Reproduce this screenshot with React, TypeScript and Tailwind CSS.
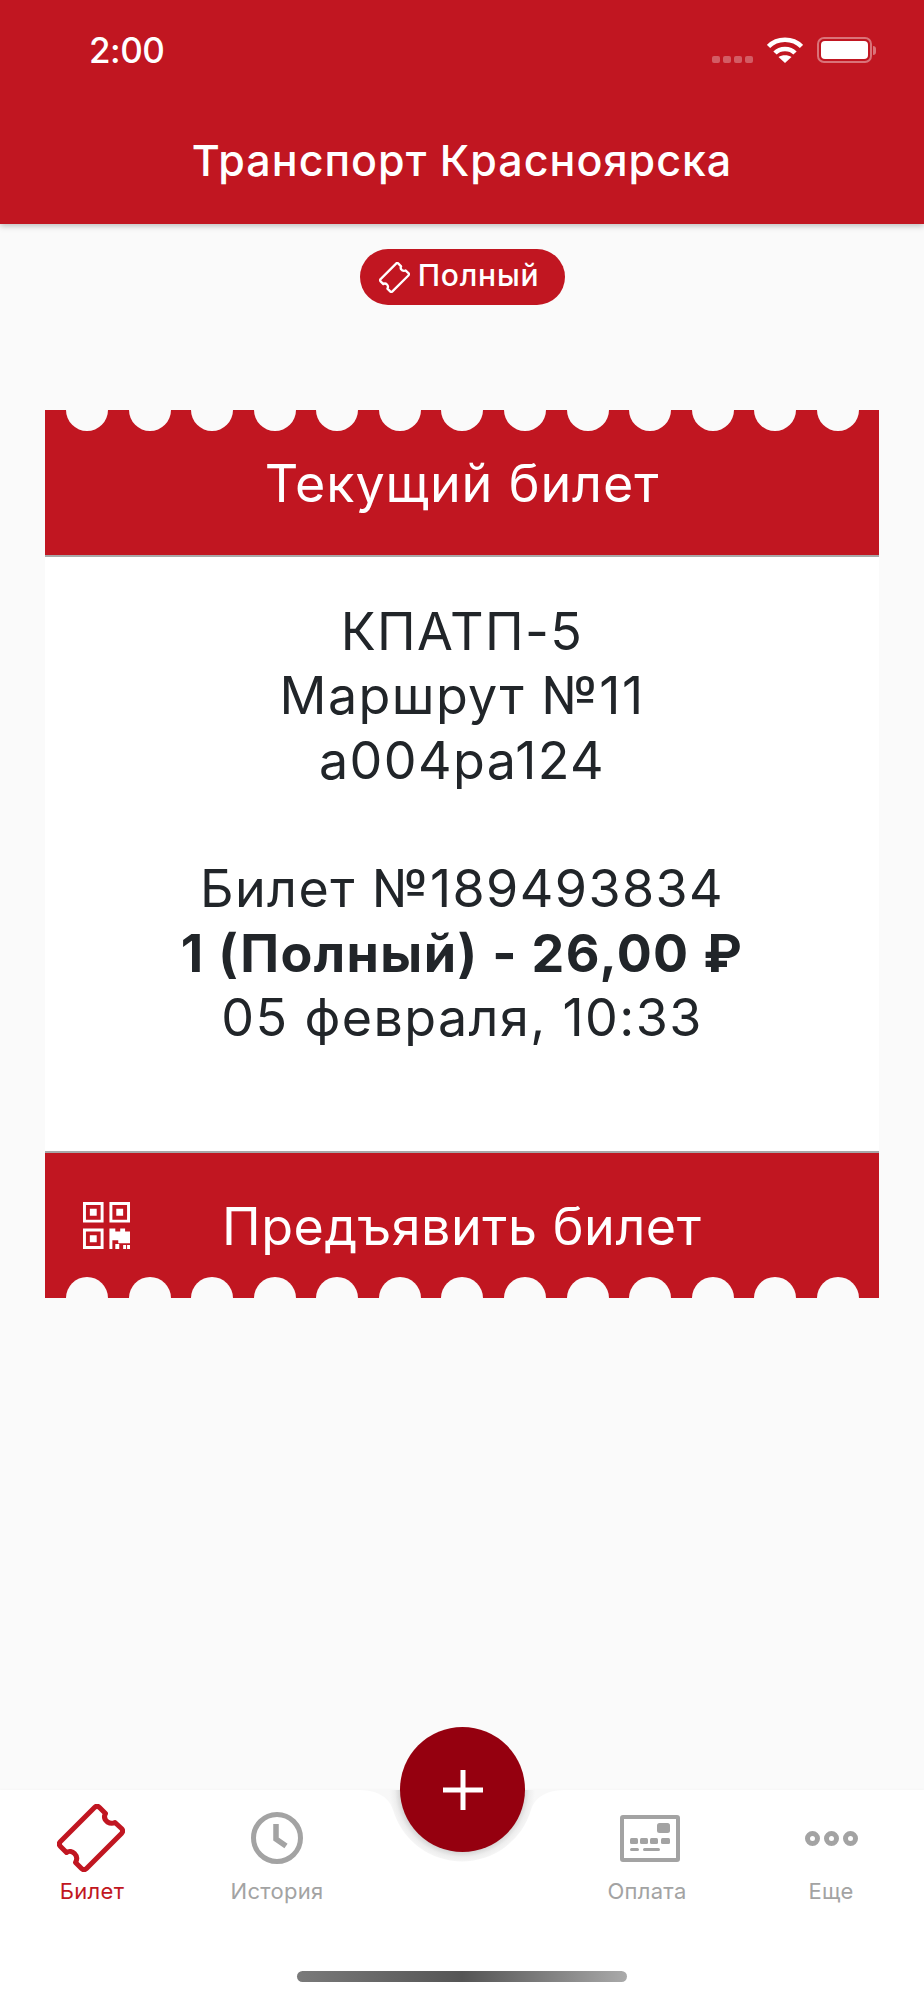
const red = 'bg-[#c11621]'

function Ticket({ className }: { className?: string }) {
  return (
    <svg viewBox="0 0 68 68" fill="none" stroke="currentColor" strokeWidth="5" strokeLinejoin="round" className={className}>
      <path d="M37.5 3.5 Q40 1 42.5 3.5 L48.5 9.5 C46.5 13 48 16 50.5 18 C53 19.5 55 20 58 18.5 L64.5 24.5 Q67 27 64.5 29.5 L29.5 64.5 Q27 67 24.5 64.5 L18.5 58.5 C20.5 55 19.5 51.5 17.5 49.5 C15.5 47.5 12 46.5 9.5 48.5 L3.5 42.5 Q1 40 3.5 37.5 Z" />
    </svg>
  )
}

function Scallops({ position }: { position: 'top' | 'bottom' }) {
  return (
    <div className={`absolute inset-x-0 flex justify-between pl-[21px] pr-[20px] ${position === 'top' ? 'top-[-21px]' : 'bottom-[-21px]'}`}>
      {Array.from({ length: 13 }).map((_, i) => (
        <div key={i} className="h-[42px] w-[42px] rounded-full bg-[#fafafa]" />
      ))}
    </div>
  )
}

function QrIcon() {
  return (
    <svg viewBox="0 0 48 48" className="h-[47px] w-[47px] text-white" fill="currentColor">
      <path fillRule="evenodd" d="M0 0h21v21H0zM3 3v15h15V3zM7 7h7v7H7zM27 0h21v21H27zM30 3v15h15V3zM34 7h7v7h-7zM0 27h21v21H0zM3 30v15h15V30zM7 34h7v7H7z" />
      <path d="M27 27h6v3h5v-3h5v3h5v12h-12v-3h-6v9h-3zM33 43h4v5h-4zM41 44h3v4h-3zM45 44h3v4h-3z" />
    </svg>
  )
}

function TabItem({ label, active, icon }: { label: string; active?: boolean; icon: React.ReactNode }) {
  return (
    <div className={`flex w-[120px] flex-col items-center ${active ? 'text-[#c11621]' : 'text-[#a3a3a3]'}`}>
      <div className="flex h-[70px] items-center justify-center">{icon}</div>
      <span className="mt-[6px] text-[22px] leading-[24px] tracking-[0.3px]">{label}</span>
    </div>
  )
}

export default function App() {
  return (
    <div className="relative flex h-[2000px] w-[924px] flex-col overflow-hidden bg-[#fafafa] font-['Inter',sans-serif] text-[#212529]">
      <header className={`${red} h-[224px] shrink-0 text-white shadow-[0_2px_6px_rgba(0,0,0,0.25)]`}>
        <div className="flex h-[100px] items-center justify-between pl-[89px] pr-[48px]">
          <span className="text-[35px] font-medium tracking-[-0.5px]">2:00</span>
          <div className="flex items-center">
            <div className="mr-[14px] mt-[19px] flex gap-[3px]">
              {[0, 1, 2, 3].map((i) => (
                <div key={i} className="h-[7px] w-[8px] rounded-[2px] bg-white/30" />
              ))}
            </div>
            <svg viewBox="0 0 36 26" className="mr-[14px] h-[26px] w-[36px]" fill="none" stroke="white" strokeWidth="4.5">
              <path d="M1.5 9.5 C10 0.5 26 0.5 34.5 9.5" />
              <path d="M8 16 C13 10.5 23 10.5 28 16" />
              <path d="M18 26 L11.5 20 C15 17.5 21 17.5 24.5 20 Z" fill="white" stroke="none" />
            </svg>
            <div className="h-[26px] w-[55px] rounded-[7px] border-2 border-white/40 p-[2px]">
              <div className="h-full w-full rounded-[4px] bg-white" />
            </div>
            <div className="ml-[1px] h-[9px] w-[3px] rounded-r-full bg-white/40" />
          </div>
        </div>
        <h1 className="mt-[34px] text-center text-[43px] leading-[52px] font-medium tracking-[1px]">Транспорт Красноярска</h1>
      </header>

      <div className="mt-[25px] flex justify-center">
        <div className={`${red} flex h-[56px] w-[205px] items-center justify-center gap-[8px] rounded-full pr-[6px] text-white`}>
          <Ticket className="h-[31px] w-[31px]" />
          <span className="pb-[4px] text-[30px] font-medium tracking-[0.8px]">Полный</span>
        </div>
      </div>

      <main className="mx-[45px] mt-[105px]">
        <div className={`${red} relative flex h-[145px] items-center justify-center overflow-hidden pt-[2px] text-white`}>
          <Scallops position="top" />
          <span className="text-[52px] tracking-[0.9px]">Текущий билет</span>
        </div>
        <div className="flex h-[598px] flex-col items-center border-y-2 border-[#a8a8a8] bg-white pt-[43px] text-center text-[52px] leading-[64.4px] tracking-[1.4px]">
          <p>КПАТП-5</p>
          <p>Маршрут №11</p>
          <p>а004ра124</p>
          <p className="mt-[64px]">Билет №189493834</p>
          <p className="font-bold">1 (Полный) - 26,00 ₽</p>
          <p>05 февраля, 10:33</p>
        </div>
        <div className={`${red} relative flex h-[145px] items-center overflow-hidden text-white`}>
          <Scallops position="bottom" />
          <div className="ml-[38px] shrink-0">
            <QrIcon />
          </div>
          <span className="ml-[92px] pt-[2px] text-[52px] tracking-[0.56px]">Предъявить билет</span>
        </div>
      </main>

      <nav className="absolute inset-x-0 bottom-0 h-[210px] bg-white shadow-[0_-1px_2px_rgba(0,0,0,0.02)]">
        <div className="flex pt-[13px]">
          <div className="ml-[32px]">
            <TabItem active label="Билет" icon={<Ticket className="mr-[3px] h-[68px] w-[68px]" />} />
          </div>
          <div className="ml-[65px]">
            <TabItem
              label="История"
              icon={
                <svg viewBox="0 0 52 52" className="h-[52px] w-[52px]" fill="none" stroke="currentColor" strokeWidth="5">
                  <circle cx="26" cy="26" r="23.5" />
                  <path d="M25 12 V27 L35 34" strokeWidth="5.5" />
                </svg>
              }
            />
          </div>
          <div className="ml-[250px]">
            <TabItem
              label="Оплата"
              icon={
                <svg viewBox="0 0 60 47" className="ml-[6px] h-[47px] w-[60px]" fill="currentColor">
                  <path fillRule="evenodd" d="M3 0h54a3 3 0 0 1 3 3v41a3 3 0 0 1-3 3H3a3 3 0 0 1-3-3V3a3 3 0 0 1 3-3zM4 4v39h52V4z" />
                  <rect x="37" y="8" width="13" height="10" rx="2.5" />
                  <rect x="10" y="23" width="8" height="6" rx="1.5" />
                  <rect x="20" y="23" width="8" height="6" rx="1.5" />
                  <rect x="30" y="23" width="8" height="6" rx="1.5" />
                  <rect x="41" y="23" width="9" height="6" rx="1.5" />
                  <rect x="10" y="33" width="9" height="3" rx="1.5" />
                  <rect x="23" y="33" width="17" height="3" rx="1.5" />
                </svg>
              }
            />
          </div>
          <div className="ml-[64px]">
            <TabItem
              label="Еще"
              icon={
                <svg viewBox="0 0 53 15" className="h-[15px] w-[53px]" fill="none" stroke="currentColor" strokeWidth="5">
                  <circle cx="7.5" cy="7.5" r="5" />
                  <circle cx="26.5" cy="7.5" r="5" />
                  <circle cx="45.5" cy="7.5" r="5" />
                </svg>
              }
            />
          </div>
        </div>
        <div className="absolute bottom-[18px] left-[297px] h-[11px] w-[330px] rounded-full bg-linear-to-r from-[#7a7a7a] via-[#555555] to-[#aaaaaa]" />
      </nav>

      {/* notch the fab sits in */}
      <svg viewBox="0 0 244 75" className="absolute left-[340px] top-[1790px] h-[75px] w-[244px]">
        <defs>
          <radialGradient id="notch" gradientUnits="userSpaceOnUse" cx="122" cy="0" r="73">
            <stop offset="0.85" stopColor="#d6d6d6" />
            <stop offset="0.92" stopColor="#eeeeee" />
            <stop offset="1" stopColor="#f8f8f8" />
          </radialGradient>
        </defs>
        <path d="M17 0 C35 0 48 5 53 20 A72 72 0 0 0 191 20 C196 5 209 0 227 0 Z" fill="url(#notch)" />
      </svg>

      <button className="absolute left-[400px] top-[1727px] flex h-[125px] w-[125px] items-center justify-center rounded-full bg-[#95000f] text-white">
        <svg viewBox="0 0 40 40" className="h-[40px] w-[40px]" fill="white">
          <rect x="17.5" y="0" width="5" height="40" />
          <rect x="0" y="17.5" width="40" height="5" />
        </svg>
      </button>
    </div>
  )
}
